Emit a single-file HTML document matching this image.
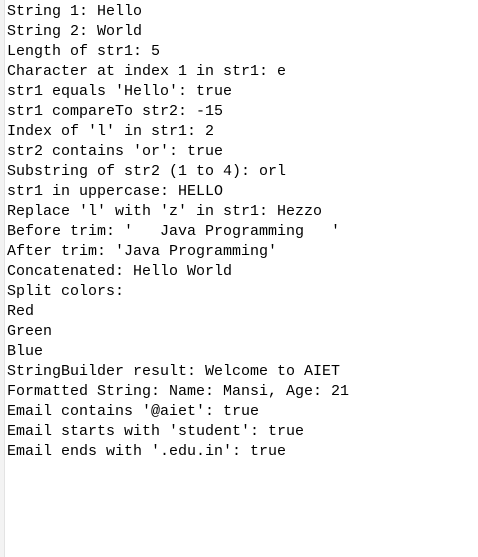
<!DOCTYPE html>
<html><head><style>
html,body{margin:0;padding:0;background:#fff;width:478px;height:557px;overflow:hidden}
.strip{position:absolute;left:0;top:0;width:4px;height:557px;background:#f3f3f3;border-right:1px solid #e3e3e3}
pre{position:absolute;left:7px;top:2px;margin:0;font-family:"Liberation Mono",monospace;font-size:15px;line-height:20px;color:#000}
</style></head><body><div class="strip"></div><pre>String 1: Hello
String 2: World
Length of str1: 5
Character at index 1 in str1: e
str1 equals 'Hello': true
str1 compareTo str2: -15
Index of 'l' in str1: 2
str2 contains 'or': true
Substring of str2 (1 to 4): orl
str1 in uppercase: HELLO
Replace 'l' with 'z' in str1: Hezzo
Before trim: '   Java Programming   '
After trim: 'Java Programming'
Concatenated: Hello World
Split colors:
Red
Green
Blue
StringBuilder result: Welcome to AIET
Formatted String: Name: Mansi, Age: 21
Email contains '@aiet': true
Email starts with 'student': true
Email ends with '.edu.in': true</pre></body></html>
